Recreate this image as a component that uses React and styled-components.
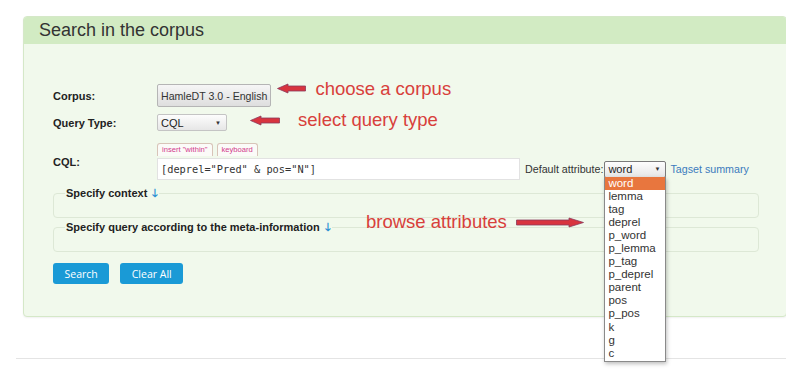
import styled, { createGlobalStyle } from 'styled-components';

const GlobalStyle = createGlobalStyle`
    html, body {
        margin: 0;
        padding: 0;
        background: #ffffff;
        font-family: "Liberation Sans", Arial, sans-serif;
        color: #333;
    }
`

const Page = styled.div`
    width: 786px;
    height: 370px;
    overflow: hidden;
    padding-top: 16px;
    box-sizing: border-box;
`

const Panel = styled.section`
    margin-left: 23px;
    width: 762px;
    border: 1px solid #d5e8c8;
    border-radius: 4px;
    background: #f1f9ec;
    box-shadow: 0 1px 2px rgba(0, 0, 0, 0.06);
`

const PanelHeader = styled.h2`
    margin: 0;
    height: 27px;
    padding-left: 15px;
    background: #d2ebc3;
    border-radius: 3px 3px 0 0;
    font-size: 18px;
    font-weight: normal;
    line-height: 27px;
    color: #333;
`

const PanelBody = styled.div`
    position: relative;
    padding: 40px 27px 32px 29px;
`

const FormRow = styled.div`
    display: flex;
    align-items: center;
    margin-bottom: ${p => p.$gap || 0}px;
`

const Label = styled.label`
    width: 104px;
    flex-shrink: 0;
    font-size: 11px;
    font-weight: bold;
    color: #222;
`

const GrayButton = styled.button`
    height: 23px;
    padding: 0 3px;
    border: 1px solid #b5b5b5;
    border-radius: 2px;
    background: linear-gradient(#f6f6f6, #dedede);
    font-family: "Liberation Sans", Arial, sans-serif;
    font-size: 10.6px;
    color: #333;
`

const SelectBox = styled.div`
    display: flex;
    align-items: center;
    justify-content: space-between;
    box-sizing: border-box;
    width: ${p => p.$w}px;
    height: 17px;
    padding: 0 5px 0 3px;
    border: 1px solid ${p => (p.$dark ? '#7a7a7a' : '#c4c4c4')};
    border-radius: 2px;
    background: linear-gradient(#fdfdfd, #e6e6e6);
    font-size: 11px;
    color: #222;

    &::after {
        content: "▼";
        font-size: 6px;
        color: #333;
    }
`

const Note = styled.div`
    display: flex;
    align-items: center;
    margin-top: ${p => p.$up || 0}px;
    margin-left: ${p => p.$ml}px;
    font-size: 18.5px;
    color: #d8403b;
    white-space: nowrap;

    svg {
        margin-right: ${p => p.$gap}px;
    }
`

const CqlBlock = styled.div`
    display: flex;
    flex-direction: column;
`

const TagRow = styled.div`
    display: flex;
    gap: 4px;
    margin-bottom: 2px;
`

const Tag = styled.span`
    height: 12px;
    padding: 0 4px;
    border: 1px solid #d8c4b8;
    border-bottom: none;
    border-radius: 3px 3px 0 0;
    background: #fbfbf8;
    font-size: 7.6px;
    line-height: 12px;
    color: #d23a8c;
`

const InputLine = styled.div`
    display: flex;
    align-items: center;
    font-size: 10.7px;
    color: #333;
`

const QueryInput = styled.div`
    box-sizing: border-box;
    width: 363px;
    height: 22px;
    padding-left: 3px;
    margin-right: 5px;
    border: 1px solid #e2e2e2;
    background: #fff;
    font-family: "DejaVu Sans Mono", "Liberation Mono", monospace;
    font-size: 10.3px;
    line-height: 20px;
    color: #333;
`

const AttrWrap = styled.div`
    position: relative;
    margin: 0 4px 0 1px;
`

const DropList = styled.ul`
    position: absolute;
    top: 16px;
    left: 0;
    z-index: 5;
    box-sizing: border-box;
    width: 62px;
    margin: 0;
    padding: 0 0 1px;
    list-style: none;
    background: #fff;
    border: 1px solid #8a8a8a;
    border-top: none;
    box-shadow: 1px 2px 4px rgba(0, 0, 0, 0.25);
`

const DropItem = styled.li`
    height: 13.1px;
    padding-left: 3px;
    font-size: 11.5px;
    line-height: 13px;
    color: ${p => (p.$active ? '#fff' : '#333')};
    background: ${p => (p.$active ? '#e8763e' : 'transparent')};
`

const TagsetLink = styled.a`
    color: #3c7bbd;
    font-size: 10.7px;
    text-decoration: none;
`

const Fieldset = styled.fieldset`
    min-width: 0;
    margin: ${p => p.$mt}px 0 0;
    padding: 0 12px ${p => p.$pb}px 11px;
    border: 1px solid #dde8d6;
    border-radius: 4px;
`

const Legend = styled.legend`
    padding: 0 1px;
    font-size: 11px;
    font-weight: bold;
    line-height: 13px;
    color: #222;

    span {
        margin-left: 5px;
        color: #2b8fd3;
    }
`

const BrowseNote = styled(Note)`
    position: absolute;
    left: 342px;
    top: 167px;
`

const ButtonRow = styled.div`
    display: flex;
    gap: 11px;
    margin-top: 11px;
`

const BlueButton = styled.button`
    height: 21px;
    padding: 0 ${p => p.$px}px;
    border: none;
    border-radius: 3px;
    background: #1a9ad6;
    color: #fff;
    font-family: "Open Sans", sans-serif;
    font-size: 10.5px;
`

const Rule = styled.hr`
    margin: 41px 0 0 16px;
    border: none;
    border-top: 1px solid #e4e4e4;
`

const Arrow = ({ w, right }) => (
    <svg width={w} height="11" viewBox={`0 0 ${w} 11`}>
        <polygon
            points={
                right
                    ? `0.5,3 ${w - 15},3 ${w - 15},1 ${w - 0.5},5.5 ${w - 15},10 ${w - 15},8 0.5,8`
                    : `${w - 0.5},3 11,3 11,1 0.5,5.5 11,10 11,8 ${w - 0.5},8`
            }
            fill="#d8343f"
            stroke="#8c3a5c"
            strokeWidth="0.8"
            strokeLinejoin="round"
        />
    </svg>
)

const attributes = ['word', 'lemma', 'tag', 'deprel', 'p_word', 'p_lemma', 'p_tag', 'p_deprel', 'parent', 'pos', 'p_pos', 'k', 'g', 'c']

const App = () => {
    return (
        <Page>
            <GlobalStyle />
            <Panel>
                <PanelHeader>Search in the corpus</PanelHeader>
                <PanelBody>
                    <FormRow $gap={7}>
                        <Label>Corpus:</Label>
                        <GrayButton>HamleDT 3.0 - English</GrayButton>
                        <Note $ml={6} $up={-14} $gap={9}>
                            <Arrow w={29} />
                            choose a corpus
                        </Note>
                    </FormRow>
                    <FormRow $gap={12}>
                        <Label>Query Type:</Label>
                        <SelectBox $w={70}>CQL</SelectBox>
                        <Note $ml={23} $up={-5} $gap={18}>
                            <Arrow w={30} />
                            select query type
                        </Note>
                    </FormRow>
                    <FormRow>
                        <Label>CQL:</Label>
                        <CqlBlock>
                            <TagRow>
                                <Tag>insert "within"</Tag>
                                <Tag>keyboard</Tag>
                            </TagRow>
                            <InputLine>
                                <QueryInput>[deprel="Pred" &amp; pos="N"]</QueryInput>
                                Default attribute:
                                <AttrWrap>
                                    <SelectBox $w={62} $dark>word</SelectBox>
                                    <DropList>
                                        {attributes.map((a, i) => (
                                            <DropItem key={a} $active={i === 0}>{a}</DropItem>
                                        ))}
                                    </DropList>
                                </AttrWrap>
                                <TagsetLink href="#">Tagset summary</TagsetLink>
                            </InputLine>
                        </CqlBlock>
                    </FormRow>
                    <Fieldset $mt={7} $pb={17}>
                        <Legend>Specify context<span>🡓</span></Legend>
                    </Fieldset>
                    <Fieldset $mt={3} $pb={17}>
                        <Legend>Specify query according to the meta-information<span>🡓</span></Legend>
                    </Fieldset>
                    <BrowseNote $gap={0}>
                        browse attributes
                        <span style={{ width: 9 }} />
                        <Arrow w={68} right />
                    </BrowseNote>
                    <ButtonRow>
                        <BlueButton $px={11.5}>Search</BlueButton>
                        <BlueButton $px={11.5}>Clear All</BlueButton>
                    </ButtonRow>
                </PanelBody>
            </Panel>
            <Rule />
        </Page>
    )
}

export default App;
